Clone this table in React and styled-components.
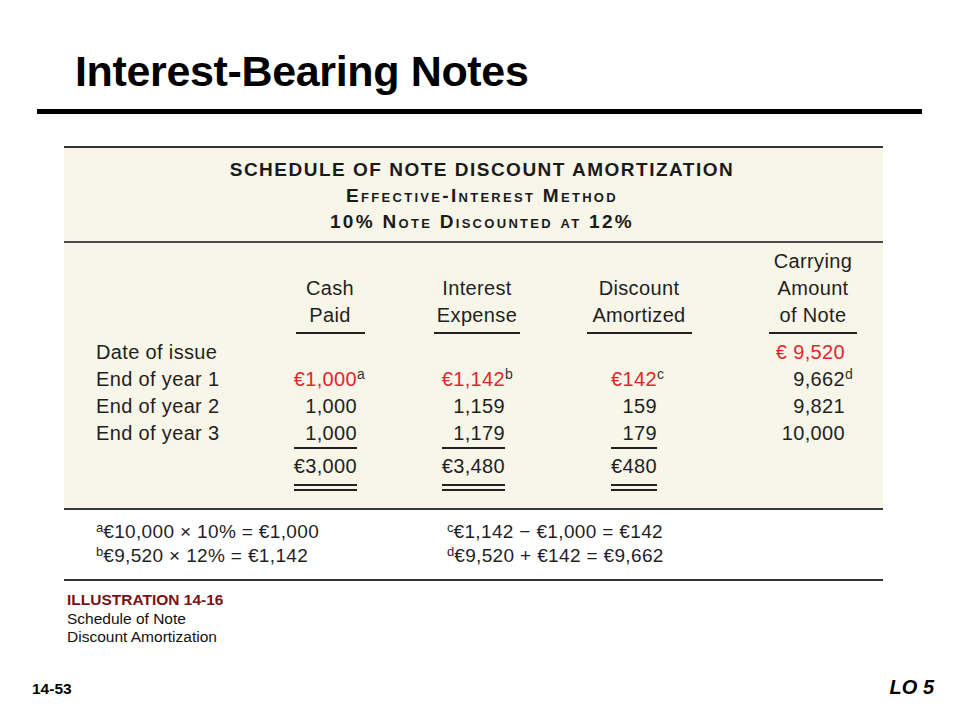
import React from "react";
import styled, { createGlobalStyle } from "styled-components";

const GlobalStyle = createGlobalStyle`
  html, body {
    margin: 0;
    padding: 0;
    background: #ffffff;
  }
  body {
    font-family: "Liberation Sans", Arial, Helvetica, sans-serif;
    color: #111111;
  }
`;

const Slide = styled.div`
  width: 960px;
  height: 720px;
  display: flex;
  flex-direction: column;
  overflow: hidden;
  background: #ffffff;
`;

const Title = styled.h1`
  margin: 0;
  padding: 47px 0 0 75px;
  font-size: 43px;
  line-height: 48px;
  font-weight: 700;
  letter-spacing: -0.35px;
  color: #000000;
`;

const TitleRule = styled.div`
  margin: 14px 38px 0 37px;
  height: 5px;
  background: #000000;
`;

const Exhibit = styled.section`
  margin: 32px 77px 0 64px;
  color: #1f1f1f;
  font-size: 20px;
  letter-spacing: 0.35px;
`;

const Rule = styled.div`
  height: 2px;
  background: ${(p) => p.$color || "#333333"};
`;

const Cream = styled.div`
  background: #f8f5e9;
`;

const Heading = styled.div`
  padding: 9px 0 6px 17px;
  text-align: center;
  font-size: 19px;
  line-height: 26px;
  font-weight: 700;
  letter-spacing: 1.5px;
  color: #1b1b1b;
`;

const HeadingLine = styled.div`
  font-variant: ${(p) => (p.$smallCaps ? "small-caps" : "normal")};
  letter-spacing: ${(p) => (p.$smallCaps ? "2.3px" : "1.5px")};
`;

const Schedule = styled.div`
  display: grid;
  grid-template-columns: 184px 100px 147px 172px 169px;
  padding: 5px 0 17px 32px;
  line-height: 27px;
`;

const ColHead = styled.div`
  justify-self: end;
  align-self: end;
  width: ${(p) => p.$w}px;
  text-align: center;
  margin-bottom: 5px;
`;

const HeadRule = styled.div`
  width: ${(p) => p.$w}px;
  height: 2px;
  margin: 3px auto 0;
  background: #222222;
`;

const RowLabel = styled.div`
  white-space: nowrap;
`;

const Amount = styled.div`
  justify-self: end;
  width: ${(p) => p.$w}px;
  padding-right: ${(p) => p.$pad}px;
  box-sizing: border-box;
  text-align: right;
  white-space: nowrap;
  color: ${(p) => (p.$red ? "#e1262d" : "#1f1f1f")};
`;

const Sup = styled.span`
  display: inline-block;
  width: 0;
  font-size: 14px;
  line-height: 0;
  letter-spacing: 0;
  vertical-align: 7px;
  color: #333333;
`;

const Total = styled.span`
  display: inline-block;
  padding: 4px 0;
  border-top: 2px solid #222222;
  border-bottom: 7px double #222222;
`;

const Notes = styled.div`
  display: grid;
  grid-template-columns: 351px 1fr;
  padding: 10px 0 11px 32px;
  font-size: 19px;
  line-height: 24px;
  letter-spacing: 0.35px;
  color: #1f1f1f;
`;

const NoteMark = styled.span`
  font-size: 13px;
  letter-spacing: 0;
  vertical-align: 6px;
  line-height: 0;
`;

const Caption = styled.div`
  margin-top: 10px;
  padding-left: 67px;
  font-size: 15.5px;
  line-height: 18.5px;
  color: #111111;
`;

const CaptionTag = styled.div`
  color: #7a1114;
  font-weight: 700;
`;

const Footer = styled.footer`
  margin-top: auto;
  display: flex;
  justify-content: space-between;
  align-items: baseline;
  padding: 0 26px 21px 32px;
  color: #000000;
`;

const PageNo = styled.span`
  font-size: 15.5px;
  font-weight: 700;
`;

const Objective = styled.span`
  font-size: 20px;
  line-height: 24px;
  font-weight: 700;
  font-style: italic;
`;

const COLUMNS = [
  { lines: ["Cash", "Paid"], box: 100, rule: 69, pad: 23 },
  { lines: ["Interest", "Expense"], box: 100, rule: 86, pad: 22 },
  { lines: ["Discount", "Amortized"], box: 120, rule: 105, pad: 42 },
  { lines: ["Carrying", "Amount", "of Note"], box: 110, rule: 88, pad: 23 },
];

const ROWS = [
  { label: "Date of issue", values: [null, null, null, { v: "€ 9,520", red: true }] },
  {
    label: "End of year 1",
    values: [
      { v: "€1,000", red: true, sup: "a" },
      { v: "€1,142", red: true, sup: "b" },
      { v: "€142", red: true, sup: "c" },
      { v: "9,662", sup: "d" },
    ],
  },
  { label: "End of year 2", values: [{ v: "1,000" }, { v: "1,159" }, { v: "159" }, { v: "9,821" }] },
  { label: "End of year 3", values: [{ v: "1,000" }, { v: "1,179" }, { v: "179" }, { v: "10,000" }] },
];

const TOTALS = ["€3,000", "€3,480", "€480", null];

const App = () => {
  return (
    <Slide>
      <GlobalStyle />
      <Title>Interest-Bearing Notes</Title>
      <TitleRule />

      <Exhibit>
        <Rule />
        <Cream>
          <Heading>
            <HeadingLine>SCHEDULE OF NOTE DISCOUNT AMORTIZATION</HeadingLine>
            <HeadingLine $smallCaps>Effective-Interest Method</HeadingLine>
            <HeadingLine $smallCaps>10% Note Discounted at 12%</HeadingLine>
          </Heading>
          <Rule $color="#4a4a4a" />
          <Schedule>
            <div />
            {COLUMNS.map((col) => (
              <ColHead key={col.lines[0]} $w={col.box}>
                {col.lines.map((line) => (
                  <div key={line}>{line}</div>
                ))}
                <HeadRule $w={col.rule} />
              </ColHead>
            ))}

            {ROWS.map((row) => (
              <React.Fragment key={row.label}>
                <RowLabel>{row.label}</RowLabel>
                {row.values.map((cell, i) => (
                  <Amount
                    key={i}
                    $w={COLUMNS[i].box}
                    $pad={COLUMNS[i].pad}
                    $red={cell && cell.red}
                  >
                    {cell ? cell.v : ""}
                    {cell && cell.sup ? <Sup>{cell.sup}</Sup> : null}
                  </Amount>
                ))}
              </React.Fragment>
            ))}

            <div />
            {TOTALS.map((t, i) => (
              <Amount key={i} $w={COLUMNS[i].box} $pad={COLUMNS[i].pad}>
                {t ? <Total>{t}</Total> : null}
              </Amount>
            ))}
          </Schedule>
        </Cream>
        <Rule $color="#3a3a3a" />
        <Notes>
          <div>
            <NoteMark>a</NoteMark>€10,000 × 10% = €1,000
          </div>
          <div>
            <NoteMark>c</NoteMark>€1,142 − €1,000 = €142
          </div>
          <div>
            <NoteMark>b</NoteMark>€9,520 × 12% = €1,142
          </div>
          <div>
            <NoteMark>d</NoteMark>€9,520 + €142 = €9,662
          </div>
        </Notes>
        <Rule />
      </Exhibit>

      <Caption>
        <CaptionTag>ILLUSTRATION 14-16</CaptionTag>
        <div>Schedule of Note</div>
        <div>Discount Amortization</div>
      </Caption>

      <Footer>
        <PageNo>14-53</PageNo>
        <Objective>LO 5</Objective>
      </Footer>
    </Slide>
  );
};

export default App;
